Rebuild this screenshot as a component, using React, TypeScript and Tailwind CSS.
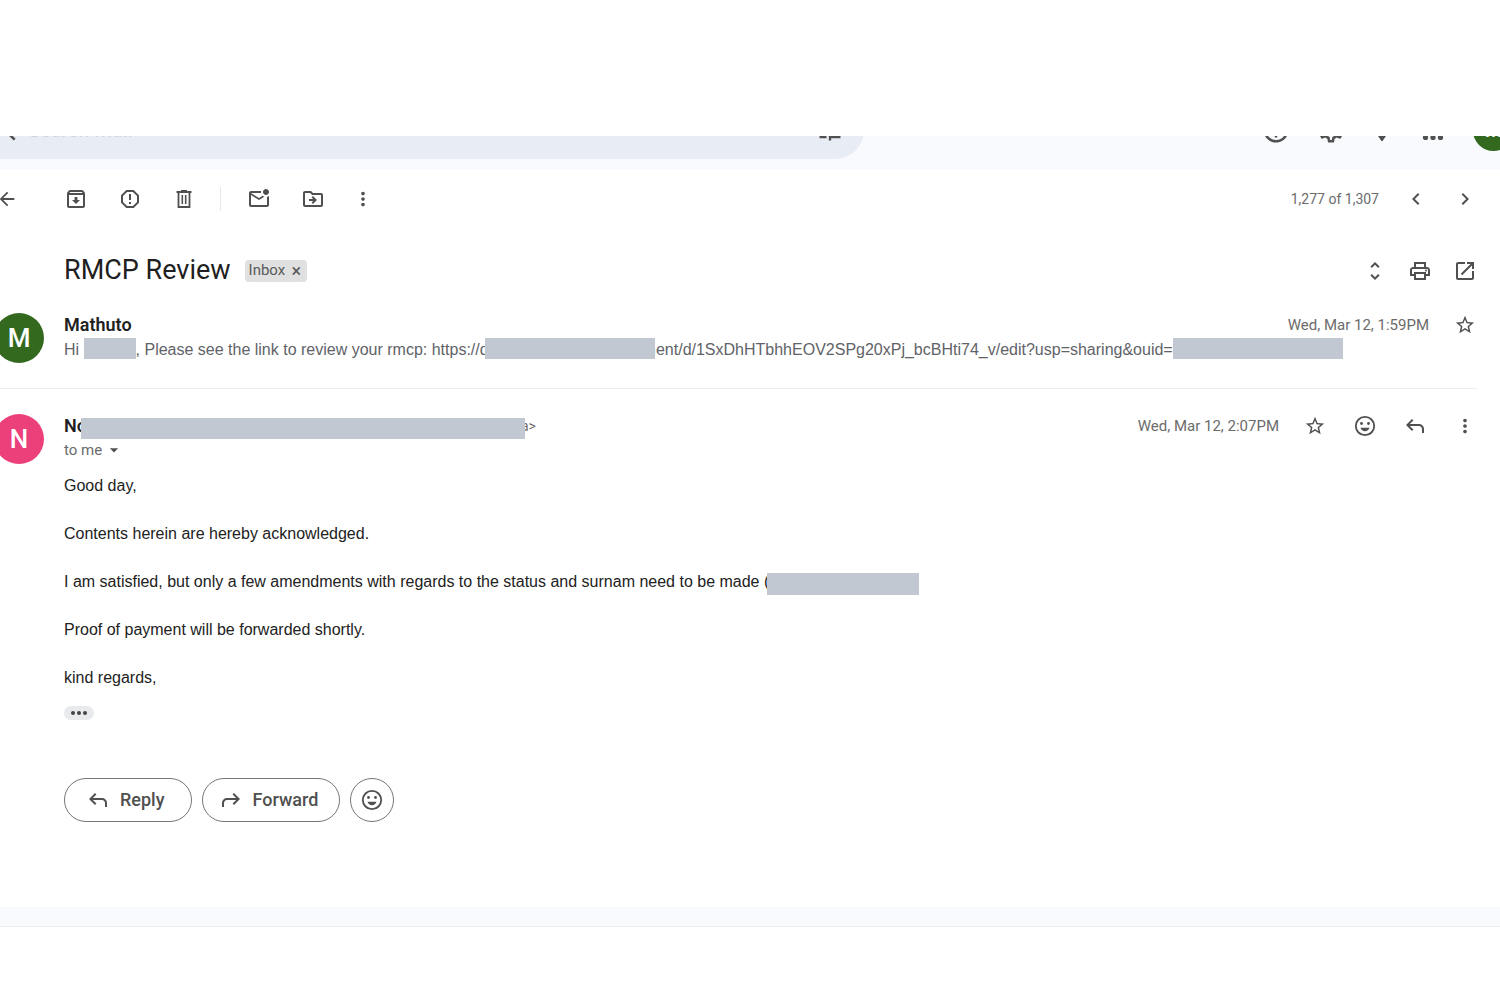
import React from 'react';
import {
  MdArrowBack,
  MdOutlineArchive,
  MdReportGmailerrorred,
  MdOutlineMarkEmailUnread,
  MdOutlineDriveFileMove,
  MdMoreVert,
  MdChevronLeft,
  MdChevronRight,
  MdUnfoldMore,
  MdOutlinePrint,
  MdOpenInNew,
  MdStarBorder,
  MdArrowDropDown,
  MdOutlineSettings,
  MdHelpOutline,
  MdSearch,
  MdTune,
} from 'react-icons/md';

interface IconButtonProps {
  label: string;
  className?: string;
  children: React.ReactNode;
}

const IconButton: React.FC<IconButtonProps> = ({ label, className = 'w-6', children }) => (
  <button type="button" aria-label={label} className={`flex h-6 shrink-0 items-center justify-center text-[#505050] ${className}`}>
    {children}
  </button>
);

const ReplyIcon: React.FC<{ flip?: boolean }> = ({ flip }) => (
  <svg viewBox="0 0 24 24" className={flip ? 'size-6 shrink-0 -scale-x-100' : 'size-6 shrink-0'} fill="currentColor">
    <path d="M19 19v-4q0-1.25-.875-2.125T16 12H6.8l3.6 3.6L9 17l-6-6 6-6 1.4 1.4L6.8 10H16q2.075 0 3.538 1.463T21 15v4h-2Z" />
  </svg>
);

const SmileIcon = () => (
  <svg viewBox="0 0 24 24" className="size-6 shrink-0" fill="currentColor">
    <circle cx="12" cy="12" r="9.200" fill="none" stroke="currentColor" strokeWidth="1.800" />
    <circle cx="8.5" cy="9.5" r="1.4" />
    <circle cx="15.5" cy="9.5" r="1.4" />
    <path d="M7.500 13.800h9c-.7 2.200-2.400 3.500-4.500 3.500s-3.800-1.300-4.500-3.500Z" />
  </svg>
);

const TrashIcon = () => (
  <svg viewBox="0 0 24 24" className="size-6" fill="none" stroke="currentColor">
    <path d="M4.500 5h15M9 4h6M6.500 5v15h11V5" strokeWidth="1.800" />
    <path d="M10.300 8v9M13.700 8v9" strokeWidth="1.600" />
  </svg>
);

const SparkIcon = () => (
  <svg viewBox="0 0 24 24" className="size-[22px]" fill="currentColor">
    <path d="M12 0l4 8 8 4-6 4-6 9-6-9-6-4 8-4Z" />
  </svg>
);

const AppsIcon = () => (
  <svg viewBox="0 0 30 30" className="size-[30px]" fill="currentColor">
    {[7.5, 15, 22.5].map((y) =>
      [7.5, 15, 22.5].map((x) => <circle key={`${x}-${y}`} cx={x} cy={y} r="2.6" />)
    )}
  </svg>
);

const Redacted: React.FC<{ className: string }> = ({ className }) => (
  <span aria-hidden="true" className={`relative inline-block shrink-0 bg-[#c1c8d2] ${className}`} />
);

const Avatar: React.FC<{ letter: string; className: string }> = ({ letter, className }) => (
  <div className={`-ml-[6px] flex size-[50px] shrink-0 items-center justify-center rounded-full text-[26px] font-medium text-white ${className}`}>
    {letter}
  </div>
);

const TopBar = () => (
  <header className="flex h-[34px] flex-col justify-end overflow-hidden bg-[#f8fafd]">
    <div className="flex h-[69px] shrink-0 items-start justify-between text-[#505050]">
      <div className="flex h-[58px] w-[58%] max-w-[864px] items-center rounded-r-full bg-[#e8ecf4] pr-5">
        <MdSearch className="-ml-[10px] size-[30px] shrink-0" />
        <input
          type="text"
          aria-label="Search mail"
          placeholder="Search mail"
          className="ml-2 min-w-0 flex-1 bg-transparent text-xl outline-none placeholder:text-[#d0d4da]"
        />
        <MdTune className="size-7" />
      </div>
      <div className="-mr-[14px] flex h-[58px] items-center gap-[25px]">
        <MdHelpOutline className="size-[30px]" />
        <MdOutlineSettings className="size-[30px]" />
        <SparkIcon />
        <AppsIcon />
        <div className="flex size-[41px] items-center justify-center rounded-full bg-[#33691e] text-xl font-medium text-white">M</div>
      </div>
    </div>
  </header>
);

const Toolbar = () => (
  <div className="flex h-[58px] items-center pr-[23px]">
    <IconButton label="Back" className="-ml-[5px] w-6"><MdArrowBack className="size-[22px]" /></IconButton>
    <div className="ml-[45px] flex items-center gap-[30px]">
      <IconButton label="Archive"><MdOutlineArchive className="size-6" /></IconButton>
      <IconButton label="Report spam"><MdReportGmailerrorred className="size-6" /></IconButton>
      <IconButton label="Delete"><TrashIcon /></IconButton>
    </div>
    <div className="mr-[26px] ml-6 h-6 w-px bg-[#e4e7ec]" />
    <div className="flex items-center gap-[30px]">
      <IconButton label="Mark as unread"><MdOutlineMarkEmailUnread className="size-6" /></IconButton>
      <IconButton label="Move to"><MdOutlineDriveFileMove className="size-6" /></IconButton>
      <IconButton label="More" className="w-4"><MdMoreVert className="size-[22px] shrink-0" /></IconButton>
    </div>
    <div className="ml-auto flex items-center gap-[25px]">
      <span className="text-sm text-[#6b6b6b]">1,277 of 1,307</span>
      <IconButton label="Newer"><MdChevronLeft className="size-6" /></IconButton>
      <IconButton label="Older"><MdChevronRight className="size-6" /></IconButton>
    </div>
  </div>
);

const Subject = () => (
  <div className="flex h-[85px] items-center pr-[23px] pl-16">
    <h1 className="text-[27px] text-[#1f1f1f]">RMCP Review</h1>
    <span className="ml-[14px] flex h-[22px] items-center gap-1 rounded bg-[#e0e0e0] px-1 text-[15px] text-[#5a5a5a]">
      Inbox
      <button type="button" aria-label="Remove label Inbox" className="w-[14px] text-lg leading-none">×</button>
    </span>
    <div className="ml-auto flex items-center gap-[21px]">
      <IconButton label="Expand all"><MdUnfoldMore className="size-6" /></IconButton>
      <IconButton label="Print"><MdOutlinePrint className="size-6" /></IconButton>
      <IconButton label="Open in new window"><MdOpenInNew className="size-6" /></IconButton>
    </div>
  </div>
);

const CollapsedMessage = () => (
  <article className="mr-[23px] flex h-[76px] items-start border-b border-[#ececec]">
    <Avatar letter="M" className="bg-[#33691e]" />
    <div className="ml-5 min-w-0 flex-1">
      <div className="flex h-6 items-center">
        <h2 className="text-lg font-semibold text-[#1f1f1f]">Mathuto</h2>
        <time className="ml-auto text-[15px] text-[#6b6b6b]">Wed, Mar 12, 1:59PM</time>
        <IconButton label="Star" className="ml-6 w-6"><MdStarBorder className="size-[22px]" /></IconButton>
      </div>
      <p className="flex h-[26px] items-center font-['Liberation_Sans',Arial,sans-serif] text-base whitespace-pre text-[#5f6368]">
        <span>Hi </span>
        <Redacted className="mb-1 h-[21px] w-[52px]" />
        <span>, Please see the link to review your rmcp: https://d</span>
        <Redacted className="-ml-1 mb-1 h-[21px] w-[170px]" />
        <span className="-ml-3">ment/d/1SxDhHTbhhEOV2SPg20xPj_bcBHti74_v/edit?usp=sharing&amp;ouid=</span>
        <Redacted className="mb-1 h-[21px] w-[170px]" />
      </p>
    </div>
  </article>
);

const paragraphs = [
  'Good day,',
  'Contents herein are hereby acknowledged.',
  'I am satisfied, but only a few amendments with regards to the status and surnam need to be made (',
  'Proof of payment will be forwarded shortly.',
  'kind regards,',
];

const OpenMessage = () => (
  <article className="mr-[23px] flex items-start pt-[25px]">
    <Avatar letter="N" className="bg-[#ec407a]" />
    <div className="ml-5 min-w-0 flex-1">
      <div className="flex h-6 items-center">
        <h2 className="text-lg font-semibold text-[#1f1f1f]">No</h2>
        <Redacted className="-ml-[6px] mt-1 h-[21px] w-[444px]" />
        <span className="-ml-1 text-sm text-[#6b6b6b]">a&gt;</span>
        <time className="ml-auto text-[15px] text-[#6b6b6b]">Wed, Mar 12, 2:07PM</time>
        <div className="ml-6 flex gap-[26px]">
          <IconButton label="Star"><MdStarBorder className="size-[22px]" /></IconButton>
          <IconButton label="Add reaction"><SmileIcon /></IconButton>
          <IconButton label="Reply"><ReplyIcon /></IconButton>
          <IconButton label="More"><MdMoreVert className="size-[22px]" /></IconButton>
        </div>
      </div>
      <button type="button" className="flex h-6 items-center gap-0.5 text-[15px] text-[#6b6b6b]">
        to me
        <MdArrowDropDown className="size-5 text-[#505050]" />
      </button>

      <div className="mt-3 flex flex-col gap-6 font-['Liberation_Sans',Arial,sans-serif] text-base text-[#222222]">
        {paragraphs.map((text) => (
          <p key={text} className="flex h-6 items-center">
            <span>{text}</span>
            {text.endsWith('(') && <Redacted className="-ml-0.5 mt-1 h-[22px] w-[152px]" />}
          </p>
        ))}
      </div>

      <button type="button" aria-label="Show trimmed content" className="mt-4 flex h-[14px] w-[30px] items-center justify-center gap-0.5 rounded-full bg-[#e8eaed]">
        <span className="size-1 rounded-full bg-[#444444]" />
        <span className="size-1 rounded-full bg-[#444444]" />
        <span className="size-1 rounded-full bg-[#444444]" />
      </button>

      <div className="mt-[58px] flex gap-[10px] text-lg font-medium text-[#505050]">
        <button type="button" className="flex h-11 items-center gap-[10px] rounded-full border border-[#747775] pr-[26px] pl-[21px]">
          <ReplyIcon />
          Reply
        </button>
        <button type="button" className="flex h-11 items-center gap-[10px] rounded-full border border-[#747775] pr-[21px] pl-4">
          <ReplyIcon flip />
          Forward
        </button>
        <button type="button" aria-label="Add reaction" className="flex size-11 items-center justify-center rounded-full border border-[#747775]">
          <SmileIcon />
        </button>
      </div>
    </div>
  </article>
);

const App: React.FC = () => {
  return (
    <div className="min-h-screen overflow-x-hidden bg-white pt-[136px] font-[Roboto,sans-serif]">
      <TopBar />
      <main>
        <Toolbar />
        <Subject />
        <CollapsedMessage />
        <OpenMessage />
      </main>
      <footer className="mt-[85px] h-5 border-b border-[#ebedef] bg-[#f8fafd]" />
    </div>
  );
};

export default App;
